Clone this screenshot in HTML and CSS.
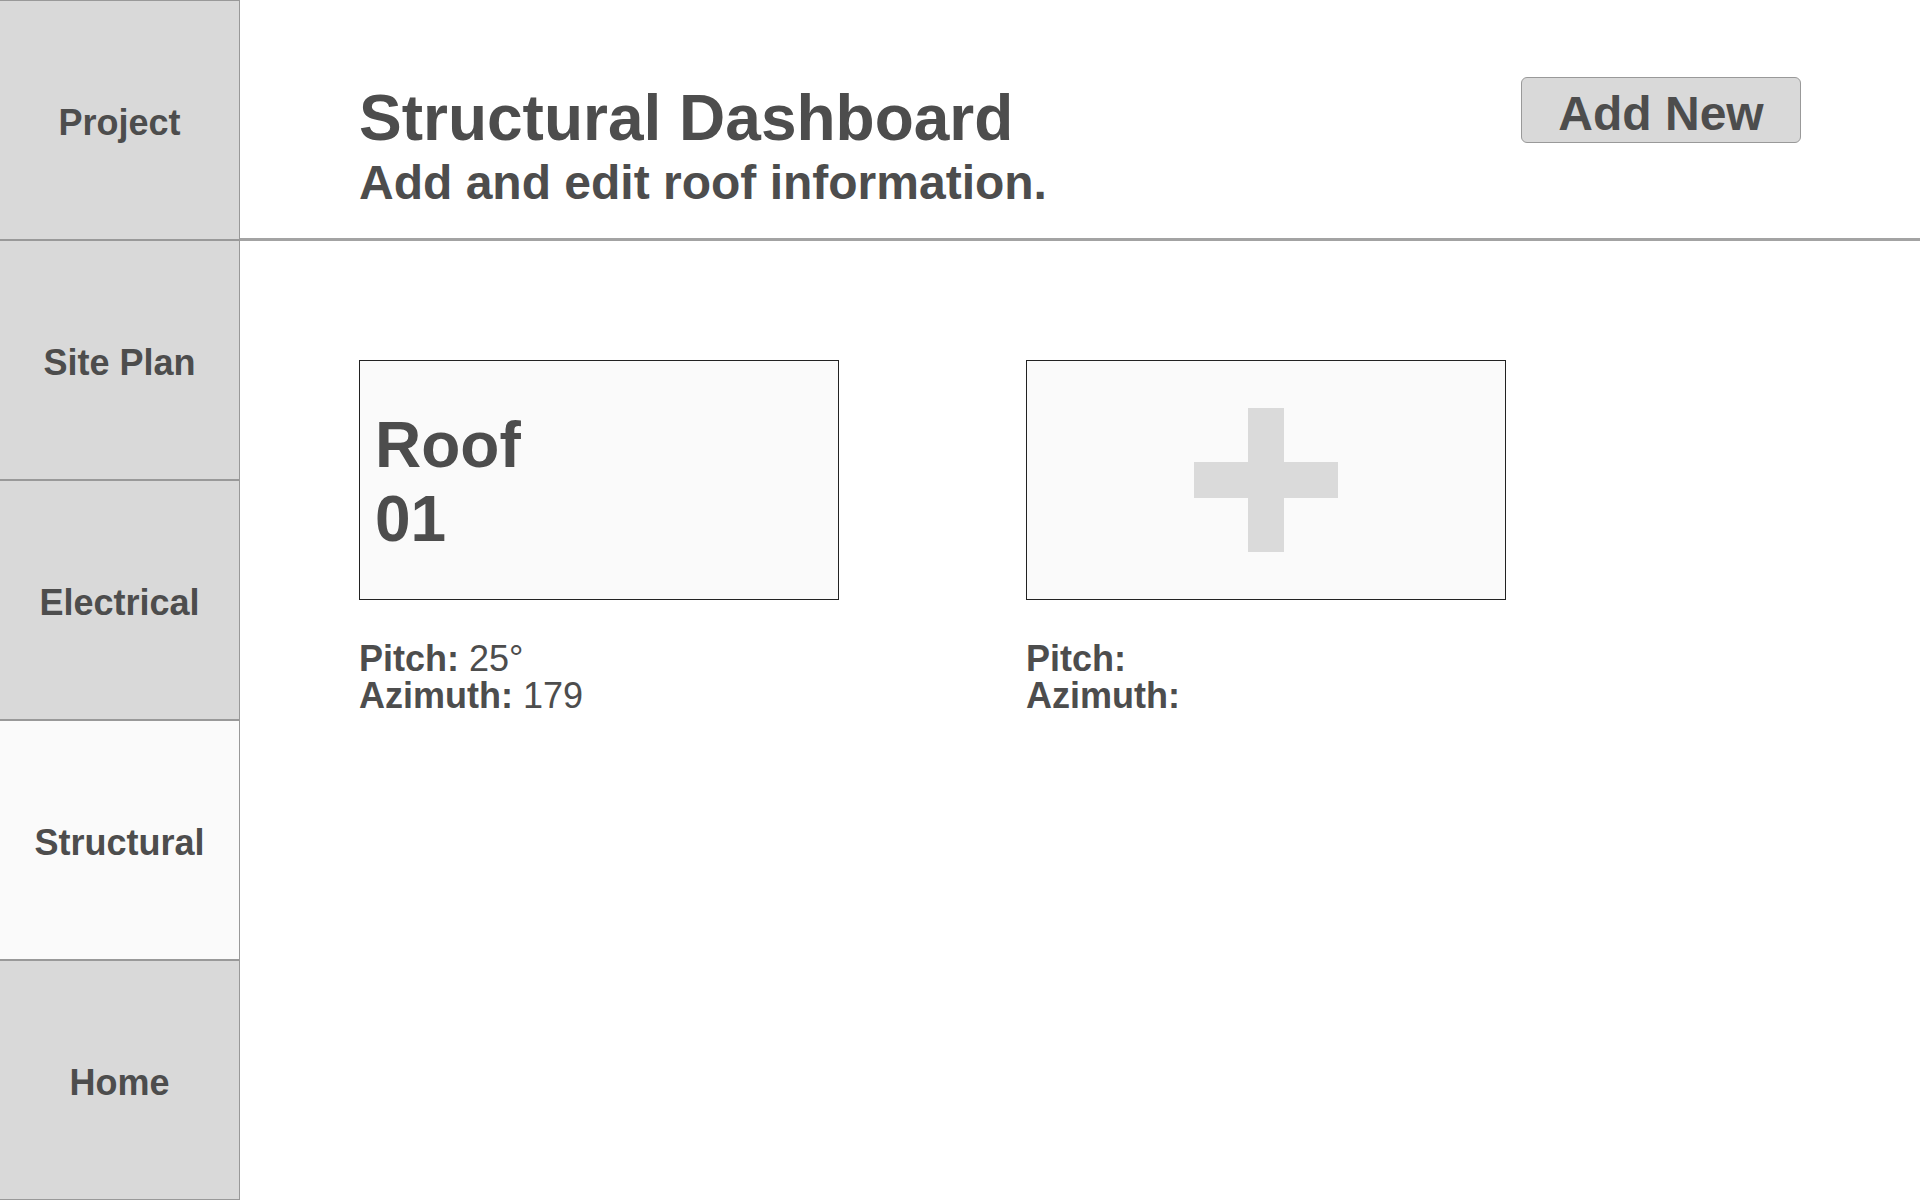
FILE: index.html
```html
<!DOCTYPE html>
<html lang="en">
<head>
    <meta charset="UTF-8">
    <meta name="viewport" content="width=device-width, initial-scale=1.0">
    <title>Structural Dashboard</title>
    <link rel="stylesheet" href="styles.css">
</head>
<body>
    <!-- Side navigation -->
    <nav class="sidebar">
        <a class="nav-item" href="#">Project</a>
        <a class="nav-item" href="#">Site Plan</a>
        <a class="nav-item" href="#">Electrical</a>
        <a class="nav-item active" href="#">Structural</a>
        <a class="nav-item" href="#">Home</a>
    </nav>

    <div class="main">
        <div class="header">
            <div class="heading">
                <h1>Structural Dashboard</h1>
                <h2>Add and edit roof information.</h2>
            </div>
            <button class="add-btn">Add New</button>
        </div>

        <!-- Roof list -->
        <div class="roofs">
            <div class="roof">
                <div class="roof-card">
                    <div class="roof-name">Roof<br>01</div>
                </div>
                <div class="roof-info">
                    <div><b>Pitch:</b> 25&deg;</div>
                    <div><b>Azimuth:</b> 179</div>
                </div>
            </div>

            <div class="roof">
                <div class="roof-card empty">
                    <svg width="144" height="144" viewBox="0 0 144 144">
                        <rect x="54" y="0" width="36" height="144" fill="#dadada"/>
                        <rect x="0" y="54" width="144" height="36" fill="#dadada"/>
                    </svg>
                </div>
                <div class="roof-info">
                    <div><b>Pitch:</b></div>
                    <div><b>Azimuth:</b></div>
                </div>
            </div>
        </div>
    </div>
</body>
</html>
```

FILE: styles.css
```css
* {
    box-sizing: border-box;
}
body {
    font-family: "Liberation Sans", Arial, Helvetica, sans-serif;
    margin: 0;
    color: #4d4d4d;
    background-color: #fff;
    display: flex;
    min-height: 1200px;
}
.sidebar {
    width: 240px;
    flex-shrink: 0;
    display: flex;
    flex-direction: column;
    border-right: 1px solid #999;
    background-color: #d9d9d9;
}
.nav-item {
    height: 240px;
    display: flex;
    align-items: center;
    justify-content: center;
    padding-top: 5px;
    border-top: 1px solid #999;
    border-bottom: 1px solid #999;
    color: #4d4d4d;
    text-decoration: none;
    font-size: 36px;
    font-weight: bold;
}
.nav-item.active {
    background-color: #fafafa;
}
.main {
    flex: 1;
}
.header {
    height: 241px;
    display: flex;
    justify-content: space-between;
    align-items: flex-start;
    padding: 77px 119px 0 119px;
    border-bottom: 3px solid #a3a3a3;
}
.heading {
    padding-top: 9px;
}
.heading h1 {
    margin: 0;
    font-size: 64px;
    line-height: 64px;
}
.heading h2 {
    margin: 9px 0 0;
    font-size: 48px;
    line-height: 48px;
}
.add-btn {
    width: 280px;
    height: 66px;
    padding: 7px 0 0;
    border: 1px solid #999;
    border-radius: 6px;
    background-color: #d9d9d9;
    color: #4d4d4d;
    font-family: inherit;
    font-size: 48px;
    font-weight: bold;
    cursor: pointer;
}
.roofs {
    display: flex;
    gap: 187px;
    padding: 119px 0 0 119px;
}
.roof-card {
    width: 480px;
    height: 240px;
    display: flex;
    align-items: center;
    padding: 4px 0 0 15px;
    border: 1px solid #222;
    background-color: #fafafa;
}
.roof-card.empty {
    justify-content: center;
    padding: 0;
}
.roof-name {
    font-size: 64px;
    font-weight: bold;
}
.roof-info {
    margin-top: 40px;
    font-size: 36px;
    line-height: 37px;
}
```
